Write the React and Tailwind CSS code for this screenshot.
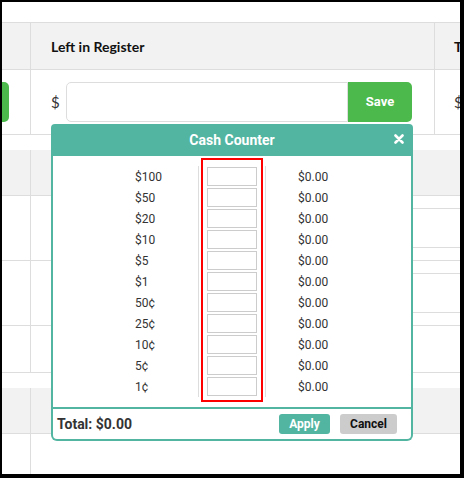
import React from 'react';

const denominations = ['$100', '$50', '$20', '$10', '$5', '$1', '50¢', '25¢', '10¢', '5¢', '1¢'];

function CloseIcon() {
  return (
    <svg width="10" height="10" viewBox="0 0 10 10">
      <path d="M1.5 1.5 L8.5 8.5 M8.5 1.5 L1.5 8.5" stroke="#fff" strokeWidth="2.6" strokeLinecap="round" />
    </svg>
  );
}

function CashCounter() {
  return (
    <div className="absolute left-[49px] top-[122px] w-[362px] font-['Roboto',sans-serif]">
      {/* header */}
      <div className="relative h-[32px] rounded-t-[4px] bg-[#52b5a1] flex items-center justify-center">
        <span className="text-[14px] font-bold text-white">Cash Counter</span>
        <button className="absolute right-[9px] top-[10px] flex items-center justify-center">
          <CloseIcon />
        </button>
      </div>

      {/* body */}
      <div className="relative h-[253px] bg-white border-x-2 border-b-2 border-[#52b5a1] pt-[10px]">
        <div className="flex flex-col">
          {denominations.map((d) => (
            <div key={d} className="flex h-[21px] text-[12px] text-[#333]">
              <div className="w-[145px] pl-[82px] flex items-center">{d}</div>
              <div className="w-[68px] border-x border-[#ddd] pl-[8px] flex items-center">
                <input className="w-[50px] h-[19px] border border-[#ccc] bg-white outline-none" />
              </div>
              <div className="flex-1 pl-[32px] flex items-center">$0.00</div>
            </div>
          ))}
        </div>
        {/* highlight box */}
        <div className="absolute left-[148px] top-[2px] w-[62px] h-[244px] border-2 border-[#ff0000] pointer-events-none" />
      </div>

      {/* footer */}
      <div className="h-[32px] bg-white border-x-2 border-b-2 border-[#52b5a1] rounded-b-[6px] flex items-center justify-between pl-[4px] pr-[14px]">
        <span className="text-[14px] font-bold text-[#333]">Total: $0.00</span>
        <div className="flex gap-[10px]">
          <button className="w-[51px] h-[20px] rounded-[3px] bg-[#52b5a1] text-white text-[12px] font-bold">Apply</button>
          <button className="w-[57px] h-[20px] rounded-[3px] bg-[#cccccc] text-[#111] text-[12px] font-bold">Cancel</button>
        </div>
      </div>
    </div>
  );
}

export default function App() {
  return (
    <div className="relative w-[464px] h-[478px] bg-white border-solid border-black border-t-2 border-l-2 border-r-4 border-b-4 overflow-hidden font-['Lato',sans-serif] text-[#222]">
      <div className="h-[20px]" />

      {/* register table */}
      <div className="flex h-[48px] border-y border-[#ddd] bg-[#f2f2f2]">
        <div className="w-[29px] shrink-0 border-r border-[#ddd]" />
        <div className="w-[404px] shrink-0 border-r border-[#ddd] pl-[20px] flex items-center text-[14px] font-bold text-[#111]">Left in Register</div>
        <div className="flex-1 min-w-0 pl-[19px] flex items-center text-[14px] font-bold text-[#111] whitespace-nowrap">Total</div>
      </div>
      <div className="flex h-[65px] border-b border-[#ddd]">
        <div className="w-[29px] shrink-0 border-r border-[#ddd] overflow-hidden flex items-center">
          <div className="w-[40px] h-[40px] ml-[-33px] shrink-0 rounded-[5px] bg-[#4cb94c]" />
        </div>
        <div className="w-[404px] shrink-0 border-r border-[#ddd] pl-[20px] flex items-center">
          <span className="w-[15px] text-[15px] text-[#333]">$</span>
          <input className="w-[282px] h-[40px] border border-[#ddd] rounded-l-[5px] bg-white outline-none" />
          <button className="w-[64px] h-[40px] rounded-r-[5px] bg-[#4cb94c] text-white text-[13px] font-bold font-['Roboto',sans-serif]">Save</button>
        </div>
        <div className="flex-1 min-w-0 pl-[19px] flex items-center text-[15px] text-[#333] whitespace-nowrap">$ 0.00</div>
      </div>

      <div className="h-[15px]" />

      {/* second table */}
      <div className="flex h-[46px] border-b border-[#ddd] bg-[#f2f2f2]">
        <div className="w-[29px] border-r border-[#ddd]" />
      </div>
      <div className="flex h-[65px] border-b border-[#ddd]">
        <div className="w-[29px] border-r border-[#ddd]" />
        <div className="flex-1" />
        <div className="w-[47px] flex flex-col">
          <div className="h-[13px] border-b border-[#ddd]" />
          <div className="h-[39px] border-b border-[#ddd]" />
        </div>
      </div>
      <div className="flex h-[65px] border-b border-[#ddd]">
        <div className="w-[29px] border-r border-[#ddd]" />
        <div className="flex-1" />
        <div className="w-[47px] flex flex-col">
          <div className="h-[13px] border-b border-[#ddd]" />
          <div className="h-[39px] border-b border-[#ddd]" />
        </div>
      </div>
      <div className="flex h-[47px] border-b border-[#ddd]">
        <div className="w-[29px] border-r border-[#ddd]" />
      </div>

      <div className="h-[15px]" />

      <div className="flex h-[46px] border-b border-[#ddd] bg-[#f2f2f2]">
        <div className="w-[29px] border-r border-[#ddd]" />
      </div>
      <div className="flex h-[60px]">
        <div className="w-[29px] border-r border-[#ddd]" />
      </div>

      <CashCounter />
    </div>
  );
}
